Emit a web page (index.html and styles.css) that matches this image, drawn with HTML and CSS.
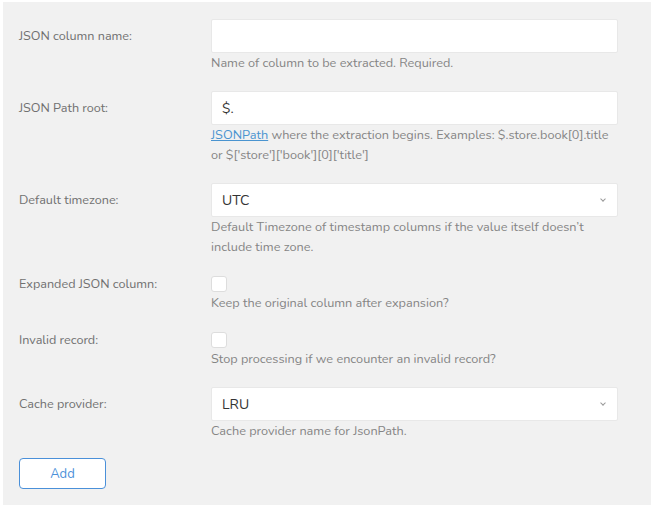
FILE: index.html
```html
<!DOCTYPE html>
<html lang="en">
<head>
  <meta charset="UTF-8">
  <meta name="viewport" content="width=device-width, initial-scale=1.0">
  <title>Expand JSON</title>
  <link rel="stylesheet" href="styles.css">
</head>
<body>
  <form class="panel">
    <div class="row">
      <label class="label" for="column-name">JSON column name:</label>
      <div class="field">
        <input class="input" id="column-name" type="text">
        <p class="help">Name of column to be extracted. Required.</p>
      </div>
    </div>

    <div class="row">
      <label class="label" for="path-root">JSON Path root:</label>
      <div class="field">
        <input class="input" id="path-root" type="text" value="$.">
        <p class="help"><a href="#">JSONPath</a> where the extraction begins. Examples: $.store.book[0].title or $['store']['book'][0]['title']</p>
      </div>
    </div>

    <div class="row">
      <label class="label" for="timezone">Default timezone:</label>
      <div class="field">
        <div class="select">
          <select class="input" id="timezone">
            <option>UTC</option>
          </select>
        </div>
        <p class="help">Default Timezone of timestamp columns if the value itself doesn’t include time zone.</p>
      </div>
    </div>

    <div class="row">
      <label class="label label-check" for="keep-column">Expanded JSON column:</label>
      <div class="field">
        <input class="check" id="keep-column" type="checkbox">
        <p class="help">Keep the original column after expansion?</p>
      </div>
    </div>

    <div class="row">
      <label class="label label-check" for="stop-invalid">Invalid record:</label>
      <div class="field">
        <input class="check" id="stop-invalid" type="checkbox">
        <p class="help">Stop processing if we encounter an invalid record?</p>
      </div>
    </div>

    <div class="row row-last">
      <label class="label" for="cache">Cache provider:</label>
      <div class="field">
        <div class="select">
          <select class="input" id="cache">
            <option>LRU</option>
          </select>
        </div>
        <p class="help">Cache provider name for JsonPath.</p>
      </div>
    </div>

    <button class="btn" type="button">Add</button>
  </form>
</body>
</html>
```

FILE: styles.css
```css
body {
  margin: 0;
  padding: 2px 3px;
  font-family: "Nunito", "Open Sans", sans-serif;
  background: #fff;
}
.panel {
  background: #f1f1f1;
  padding: 17px 16px 16px;
  width: 648px;
  box-sizing: border-box;
}
.row {
  display: flex;
  margin-bottom: 18px;
}
.row-last {
  margin-bottom: 17px;
}
.label {
  width: 192px;
  flex: none;
  font-size: 12.6px;
  color: #707070;
  line-height: 34px;
}
.label-check {
  line-height: 18px;
}
.field {
  width: 407px;
}
.input {
  display: block;
  width: 100%;
  height: 34px;
  box-sizing: border-box;
  border: 1px solid #e8e8e8;
  border-radius: 2px;
  background: #fff;
  padding: 0 10px;
  font-family: inherit;
  font-size: 14px;
  color: #333;
  outline: none;
}
.select {
  position: relative;
}
.select select {
  appearance: none;
  -webkit-appearance: none;
}
/* small chevron on the right of each select */
.select::after {
  content: "";
  position: absolute;
  right: 13px;
  top: 14px;
  width: 3px;
  height: 3px;
  border-right: 1px solid #999;
  border-bottom: 1px solid #999;
  transform: rotate(45deg);
}
.check {
  display: block;
  appearance: none;
  -webkit-appearance: none;
  margin: 1px 0;
  width: 16px;
  height: 16px;
  background: #fff;
  border: 1px solid #ddd;
  border-radius: 3px;
  box-sizing: border-box;
}
.help {
  margin: 0;
  font-size: 12.7px;
  line-height: 20px;
  color: #858585;
}
.help a {
  color: #4a94d0;
}
.btn {
  display: block;
  width: 87px;
  height: 31px;
  background: #fff;
  border: 1px solid #4a90d9;
  border-radius: 4px;
  color: #4a90d9;
  font-family: inherit;
  font-size: 13px;
}
```
